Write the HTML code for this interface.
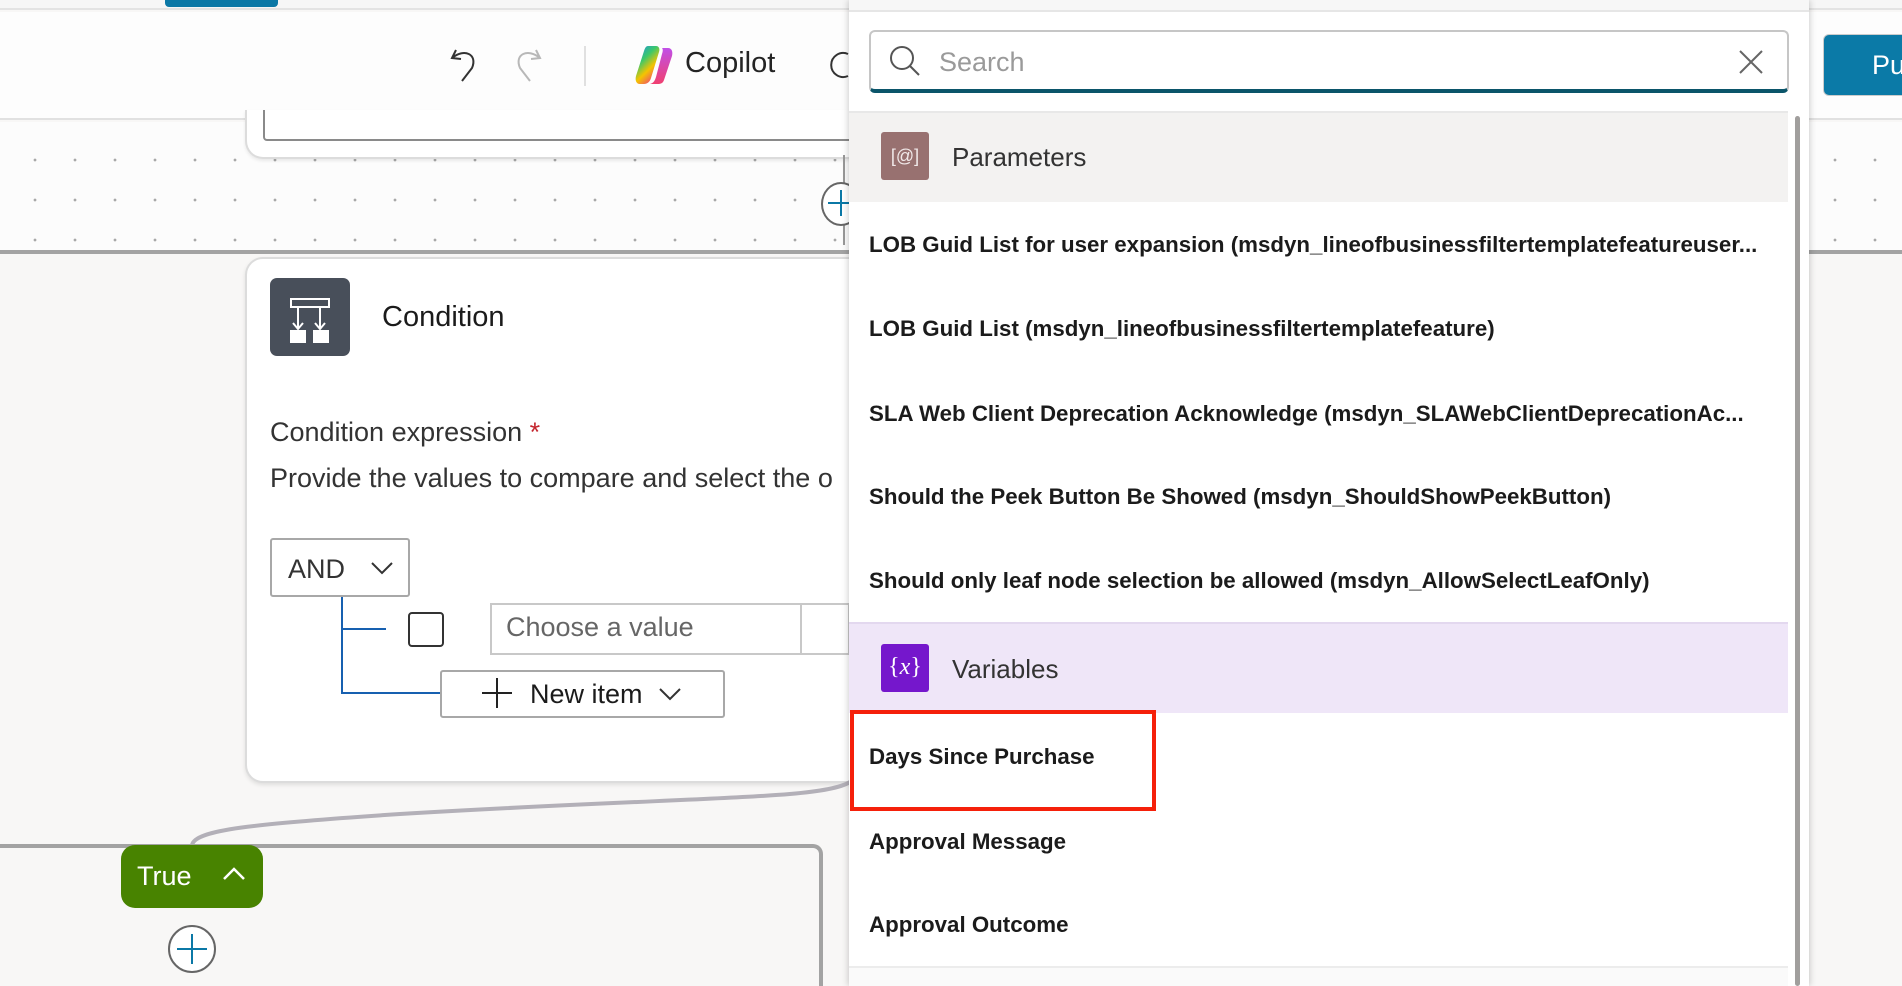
<!DOCTYPE html>
<html style="overflow:hidden;width:1902px;height:986px"><head><meta charset="utf-8"><style>
*{box-sizing:border-box;margin:0;padding:0}
body{width:1902px;height:986px;overflow:hidden;position:relative;background:#f8f7f6;font-family:"Liberation Sans",sans-serif;color:#242424}
.abs{position:absolute}
.dots{background-color:#fcfcfc;background-image:radial-gradient(circle,#a8a8a8 1.2px,transparent 1.6px);background-size:40px 40px;background-position:15px 18px}
.item{position:absolute;left:869px;font-size:22.3px;font-weight:bold;color:#1b1b1b;white-space:nowrap}
</style></head><body>
<div class="abs" style="left:0;top:0;width:1902px;height:10px;background:#f6f6f6;border-bottom:2px solid #e3e3e3"></div>
<div class="abs" style="left:165px;top:0;width:113px;height:7px;background:#0b78a6;border-radius:0 0 4px 4px"></div>
<div class="abs" style="left:0;top:12px;width:1902px;height:108px;background:#fdfdfd;border-bottom:2px solid #e1e1e1"></div>
<svg class="abs" style="left:448px;top:44px" width="34" height="40" viewBox="0 0 34 40"><path d="M8 6 L4 14 L13 15 M4 14 C16 4 30 10 24 24 L14 37" fill="none" stroke="#333" stroke-width="2"/></svg>
<svg class="abs" style="left:510px;top:44px" width="34" height="40" viewBox="0 0 34 40"><path d="M26 6 L30 14 L21 15 M30 14 C18 4 4 10 10 24 L20 37" fill="none" stroke="#b8b8b8" stroke-width="2"/></svg>
<div class="abs" style="left:584px;top:46px;width:2px;height:40px;background:#e0e0e0"></div>
<svg class="abs" style="left:632px;top:44px" width="44" height="42" viewBox="0 0 44 42"><defs><linearGradient id="cg" x1="0" y1="0" x2="0.6" y2="1"><stop offset="0" stop-color="#1a8cf0"/><stop offset=".4" stop-color="#3cc86a"/><stop offset=".7" stop-color="#f5c400"/><stop offset="1" stop-color="#f0506a"/></linearGradient><linearGradient id="cg2" x1="0" y1="0" x2="0" y2="1"><stop offset="0" stop-color="#c050e8"/><stop offset="1" stop-color="#f04070"/></linearGradient></defs><path d="M16 2 H24 C27 2 28 5 27 8 L19 34 C18 38 15 40 12 40 H8 C4 40 3 36 4 32 L12 7 C13 4 14 2 16 2Z" fill="url(#cg)"/><path d="M30 4 H36 C40 4 41 8 40 12 L32 36 C31 39 29 40 26 40 H18 C22 39 23 36 24 33 L30 10 C31 7 31 5 30 4Z" fill="url(#cg2)"/></svg>
<div class="abs" style="left:685px;top:47px;font-size:29px;color:#242424">Copilot</div>
<svg class="abs" style="left:830px;top:48px" width="20" height="34"><path d="M18 6 A12 12 0 1 0 18 28" fill="none" stroke="#333" stroke-width="2"/></svg>
<div class="abs dots" style="left:0;top:122px;width:1902px;height:128px"></div>
<div class="abs" style="left:0;top:250px;width:1902px;height:4px;background:#a3a3a3"></div>
<div class="abs" style="left:245px;top:110px;width:640px;height:49px;background:#fff;border:2px solid #dcdcdc;border-top:none;border-radius:0 0 18px 18px;box-shadow:0 2px 3px rgba(0,0,0,.08)"></div>
<div class="abs" style="left:263px;top:110px;width:620px;height:31px;border:2px solid #8a8a8a;border-top:none;border-radius:0 0 4px 4px"></div>
<div class="abs" style="left:843px;top:155px;width:2px;height:90px;background:#999"></div>
<div class="abs" style="left:821px;top:182px;width:40px;height:44px;border:2px solid #666;border-radius:50%;background:#fff"></div>
<div class="abs" style="left:840px;top:190px;width:2px;height:26px;background:#0b78a6"></div>
<div class="abs" style="left:828px;top:202px;width:26px;height:2px;background:#0b78a6"></div>
<div class="abs" style="left:245px;top:257px;width:640px;height:526px;background:#fff;border:2px solid #dcdcdc;border-radius:18px;box-shadow:0 2px 4px rgba(0,0,0,.1)"></div>
<div class="abs" style="left:270px;top:278px;width:80px;height:78px;background:#484f5a;border-radius:7px"></div>
<svg class="abs" style="left:270px;top:278px" width="80" height="78" viewBox="0 0 80 78"><rect x="21" y="21" width="38" height="8" fill="none" stroke="#fff" stroke-width="2"/><path d="M28 29 V50 M23 45 L28 51 L33 45 M50 29 V50 M45 45 L50 51 L55 45" fill="none" stroke="#fff" stroke-width="2"/><rect x="20" y="52" width="16" height="13" fill="#fff"/><rect x="43" y="52" width="16" height="13" fill="#fff"/></svg>
<div class="abs" style="left:382px;top:301px;font-size:29px;color:#1b1b1b">Condition</div>
<div class="abs" style="left:270px;top:417px;font-size:27px;color:#333">Condition expression <span style="color:#c4262e">*</span></div>
<div class="abs" style="left:270px;top:463px;font-size:27px;color:#333;white-space:nowrap">Provide the values to compare and select the o</div>
<div class="abs" style="left:270px;top:538px;width:140px;height:59px;border:2px solid #a8a8a8;border-radius:3px;background:#fff"></div>
<div class="abs" style="left:288px;top:554px;font-size:27px;color:#333">AND</div>
<svg class="abs" style="left:370px;top:560px" width="24" height="16"><path d="M2 3 L12 13 L22 3" fill="none" stroke="#333" stroke-width="2"/></svg>
<div class="abs" style="left:341px;top:597px;width:2px;height:97px;background:#1760b0"></div>
<div class="abs" style="left:341px;top:628px;width:45px;height:2px;background:#1760b0"></div>
<div class="abs" style="left:341px;top:692px;width:100px;height:2px;background:#1760b0"></div>
<div class="abs" style="left:408px;top:612px;width:36px;height:35px;border:2px solid #333;border-radius:4px;background:#fff"></div>
<div class="abs" style="left:490px;top:603px;width:360px;height:52px;border:2px solid #c8c8c8;background:#fff"></div>
<div class="abs" style="left:800px;top:603px;width:2px;height:52px;background:#c8c8c8"></div>
<div class="abs" style="left:506px;top:612px;font-size:27px;color:#666">Choose a value</div>
<div class="abs" style="left:440px;top:670px;width:285px;height:48px;border:2px solid #a8a8a8;border-radius:3px;background:#fff"></div>
<svg class="abs" style="left:480px;top:676px" width="34" height="34"><path d="M17 2 V32 M2 17 H32" stroke="#222" stroke-width="2"/></svg>
<div class="abs" style="left:530px;top:679px;font-size:27px;color:#1b1b1b">New item</div>
<svg class="abs" style="left:658px;top:686px" width="24" height="16"><path d="M2 3 L12 13 L22 3" fill="none" stroke="#333" stroke-width="2"/></svg>
<svg class="abs" style="left:0;top:770px" width="860" height="90"><path d="M850 12 C820 30 700 26 400 44 C250 54 195 60 192 75" fill="none" stroke="#b3b0b8" stroke-width="4"/></svg>
<div class="abs" style="left:-10px;top:844px;width:833px;height:142px;border:4px solid #a3a3a3;border-bottom:none;border-radius:10px 10px 0 0"></div>
<div class="abs" style="left:121px;top:845px;width:142px;height:63px;background:#488300;border-radius:14px"></div>
<div class="abs" style="left:137px;top:861px;font-size:27px;color:#fff">True</div>
<svg class="abs" style="left:222px;top:866px" width="24" height="16"><path d="M2 13 L12 3 L22 13" fill="none" stroke="#fff" stroke-width="2.5"/></svg>
<div class="abs" style="left:168px;top:925px;width:48px;height:48px;border:2px solid #666;border-radius:50%;background:#fff"></div>
<div class="abs" style="left:191px;top:934px;width:2px;height:30px;background:#0b78a6"></div>
<div class="abs" style="left:177px;top:948px;width:30px;height:2px;background:#0b78a6"></div>
<div class="abs" style="left:1823px;top:34px;width:100px;height:62px;background:#0b7aa7;border-radius:6px;border:1px solid #ccc"></div>
<div class="abs" style="left:1872px;top:50px;font-size:27px;color:#fff">Pu</div>
<div class="abs" style="left:849px;top:0;width:960px;height:986px;background:#fff;box-shadow:-2px 0 6px rgba(0,0,0,.12),2px 0 6px rgba(0,0,0,.12)"></div>
<div class="abs" style="left:849px;top:0;width:960px;height:12px;background:#f7f7f7;border-bottom:2px solid #e6e6e6"></div>
<div class="abs" style="left:869px;top:30px;width:920px;height:63px;border:2px solid #c6c6c6;border-bottom:4px solid #0b556a;border-radius:6px;background:#fff"></div>
<svg class="abs" style="left:888px;top:44px" width="34" height="34"><circle cx="14" cy="14" r="11" fill="none" stroke="#555" stroke-width="2"/><path d="M22 22 L31 31" stroke="#555" stroke-width="2"/></svg>
<div class="abs" style="left:939px;top:47px;font-size:27px;color:#9a9a9a">Search</div>
<svg class="abs" style="left:1738px;top:49px" width="26" height="26"><path d="M2 2 L24 24 M24 2 L2 24" stroke="#666" stroke-width="2"/></svg>
<div class="abs" style="left:849px;top:111px;width:939px;height:91px;background:#f3f2f1;border-top:2px solid #e8e8e8"></div>
<div class="abs" style="left:881px;top:132px;width:48px;height:48px;background:#987170;border-radius:3px;color:#f0e8e8;font-size:18px;text-align:center;line-height:48px">[@]</div>
<div class="abs" style="left:952px;top:142px;font-size:26px;color:#333">Parameters</div>
<div class="item" style="top:232px">LOB Guid List for user expansion (msdyn_lineofbusinessfiltertemplatefeatureuser...</div>
<div class="item" style="top:316px">LOB Guid List (msdyn_lineofbusinessfiltertemplatefeature)</div>
<div class="item" style="top:401px">SLA Web Client Deprecation Acknowledge (msdyn_SLAWebClientDeprecationAc...</div>
<div class="item" style="top:484px">Should the Peek Button Be Showed (msdyn_ShouldShowPeekButton)</div>
<div class="item" style="top:568px">Should only leaf node selection be allowed (msdyn_AllowSelectLeafOnly)</div>
<div class="abs" style="left:849px;top:622px;width:939px;height:91px;background:#efe6f8;border-top:2px solid #e3d8ef"></div>
<div class="abs" style="left:881px;top:644px;width:48px;height:48px;background:#7517cc;border-radius:3px;color:#fff;font-size:24px;text-align:center;line-height:46px;font-family:'Liberation Serif',serif">{<i>x</i>}</div>
<div class="abs" style="left:952px;top:654px;font-size:26px;color:#333">Variables</div>
<div class="item" style="top:744px">Days Since Purchase</div>
<div class="abs" style="left:850px;top:710px;width:306px;height:101px;border:4px solid #f5200a"></div>
<div class="item" style="top:829px">Approval Message</div>
<div class="item" style="top:912px">Approval Outcome</div>
<div class="abs" style="left:849px;top:966px;width:939px;height:2px;background:#ececec"></div>
<div class="abs" style="left:849px;top:968px;width:939px;height:18px;background:#fafafa"></div>
<div class="abs" style="left:1795px;top:116px;width:5px;height:870px;background:#a19f9d;border-radius:3px"></div>
</body></html>
